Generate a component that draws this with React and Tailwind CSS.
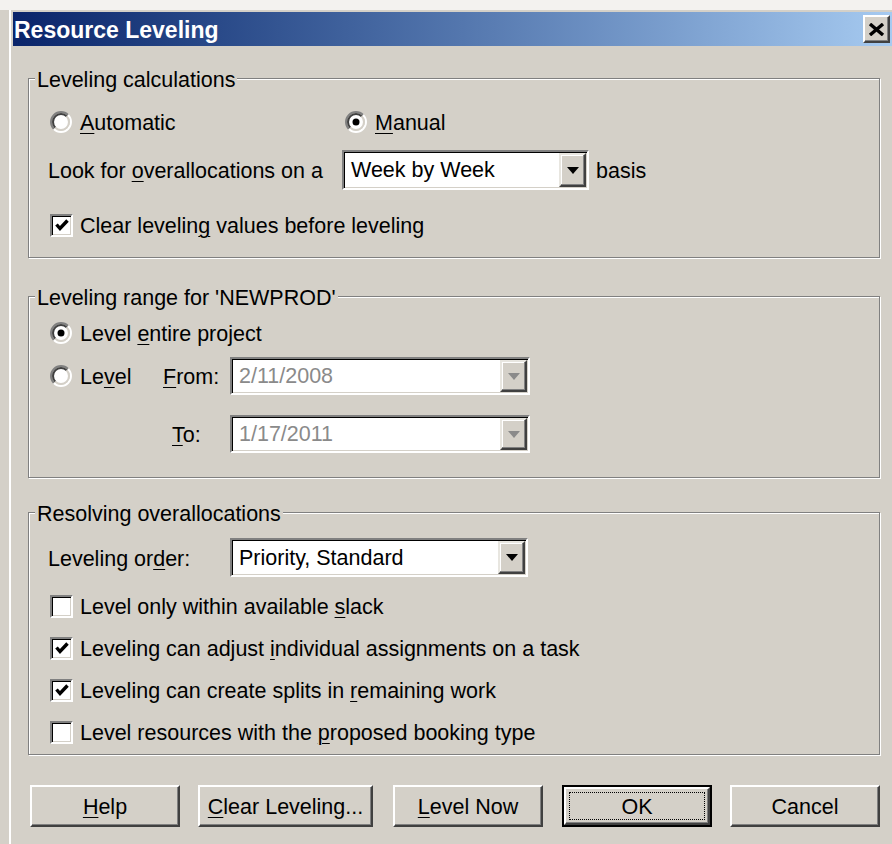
import React from "react";

// Mnemonic letter (underlined access key)
const Mn = ({ children }) => (
  <span className="underline decoration-1 underline-offset-[3px]">{children}</span>
);

// Label text, nudged to sit on the same optical line as the controls
const T = ({ className = "", children }) => (
  <span className={`relative top-[2px] ${className}`}>{children}</span>
);

function Radio({ checked }) {
  const c = 11;
  const arc = (r, a, color) => {
    const k = 0.7071;
    const bl = [c - r * k, c + r * k];
    const tr = [c + r * k, c - r * k];
    const [s, e] = a === "tl" ? [bl, tr] : [tr, bl];
    return (
      <path
        d={`M${s[0]} ${s[1]} A${r} ${r} 0 0 1 ${e[0]} ${e[1]}`}
        fill="none"
        stroke={color}
        strokeWidth="2"
      />
    );
  };
  return (
    <svg width="22" height="22" viewBox="0 0 22 22" className="shrink-0">
      <circle cx="11" cy="11" r="8" fill="#fff" />
      {arc(10, "tl", "#808080")}
      {arc(10, "br", "#ffffff")}
      {arc(8, "tl", "#404040")}
      {arc(8, "br", "#d4d0c8")}
      {checked && <circle cx="11" cy="11" r="3.5" fill="#000" />}
    </svg>
  );
}

function Check({ checked }) {
  return (
    <div className="w-[23px] h-[23px] shrink-0 bg-white border-t-2 border-l-2 border-t-[#808080] border-l-[#808080] border-b-2 border-r-2 border-b-white border-r-white shadow-[inset_1px_1px_0_#000,inset_-1px_-1px_0_#d4d0c8] flex items-center justify-center">
      {checked && (
        <svg width="16" height="16" viewBox="0 0 16 16">
          <polyline points="2.5,7.5 6,11.5 13.5,3.5" fill="none" stroke="#000" strokeWidth="3.4" />
        </svg>
      )}
    </div>
  );
}

function DropButton({ disabled }) {
  return (
    <div className="w-[27px] h-full shrink-0 bg-[#d4d0c8] border-t-2 border-l-2 border-t-[#e8e6e0] border-l-[#e8e6e0] border-b-2 border-r-2 border-b-[#404040] border-r-[#404040] shadow-[inset_-1px_-1px_0_#808080,inset_1px_1px_0_#fff] flex items-center justify-center">
      <svg width="12" height="7" viewBox="0 0 12 7">
        <polygon points="0,0 12,0 6,7" fill={disabled ? "#8a8a8a" : "#000"} />
      </svg>
    </div>
  );
}

function Combo({ value, width, height, disabled }) {
  return (
    <div
      className={`${width} ${height} shrink-0 flex bg-white border-t-2 border-l-2 border-t-[#808080] border-l-[#808080] border-b-2 border-r-2 border-b-white border-r-white shadow-[inset_1px_1px_0_#000,inset_-1px_-1px_0_#d4d0c8] p-[1px]`}
    >
      <div className={`flex-1 flex items-center pl-[6px] ${disabled ? "text-[#8a8a8a]" : "text-black"}`}>
        <span className="relative top-[1px]">{value}</span>
      </div>
      <DropButton disabled={disabled} />
    </div>
  );
}

function Group({ label, className, children }) {
  return (
    <div
      className={`relative ml-[15px] w-[852px] border border-[#808080] shadow-[inset_1px_1px_0_#fff,1px_1px_0_#fff] ${className}`}
    >
      <div className="absolute left-[6px] top-[-11px] px-[2px] bg-[#d4d0c8] leading-[24px]">
        {label}
      </div>
      {children}
    </div>
  );
}

function Button({ children, width, isDefault }) {
  const inner = (
    <div className="relative w-full h-full bg-[#d4d0c8] border-t-2 border-l-2 border-t-white border-l-white border-b-2 border-r-2 border-b-[#404040] border-r-[#404040] shadow-[inset_-1px_-1px_0_#808080] flex items-center justify-center">
      {isDefault && (
        <div className="absolute inset-[3px] border border-dotted border-black" />
      )}
      <span className="relative top-[2px]">{children}</span>
    </div>
  );
  return (
    <div className={`${width} h-[42px] shrink-0 ${isDefault ? "border-2 border-black" : ""}`}>
      {inner}
    </div>
  );
}

export default function App() {
  return (
    <div className="w-[892px] h-[844px] overflow-hidden bg-[#d4d0c8] font-['Liberation_Sans',Arial,sans-serif] text-[21.5px] leading-none text-black">
      <div className="h-[10px] bg-[#f3f2ef]" />
      <div className="flex h-[834px]">
        <div className="w-[9px] shrink-0" />
        <div className="flex-1 border-l-2 border-l-white pl-[2px] pt-[2px]">
          {/* Title bar */}
          <div className="h-[34px] flex items-center justify-between bg-linear-to-r from-[#0a246a] to-[#a6caf0] pl-[1px] pr-[2px]">
            <span className="relative top-[1px] font-bold text-white text-[23px]">Resource Leveling</span>
            <div className="w-[27px] h-[28px] bg-[#d4d0c8] border-t-2 border-l-2 border-t-white border-l-white border-b-2 border-r-2 border-b-[#404040] border-r-[#404040] shadow-[inset_-1px_-1px_0_#808080] flex items-center justify-center">
              <svg width="17" height="13" viewBox="0 0 17 13">
                <path d="M2 1 L15 12 M15 1 L2 12" stroke="#000" strokeWidth="3.4" />
              </svg>
            </div>
          </div>

          {/* Leveling calculations */}
          <Group label="Leveling calculations" className="mt-[32px] h-[180px] pt-[31px] pl-[19px]">
            <div className="h-[24px] flex items-center">
              <div className="w-[295px] flex items-center gap-[8px] ml-[2px]">
                <Radio />
                <T>
                  <Mn>A</Mn>utomatic
                </T>
              </div>
              <div className="flex items-center gap-[8px]">
                <Radio checked />
                <T>
                  <Mn>M</Mn>anual
                </T>
              </div>
            </div>
            <div className="mt-[16px] h-[40px] flex items-center">
              <T className="w-[294px] shrink-0">
                Look for <Mn>o</Mn>verallocations on a
              </T>
              <Combo value="Week by Week" width="w-[247px]" height="h-[40px]" />
              <T className="ml-[7px]">basis</T>
            </div>
            <div className="mt-[23px] h-[24px] flex items-center gap-[7px] ml-[2px]">
              <Check checked />
              <T>
                Clear levelin<Mn>g</Mn> values before leveling
              </T>
            </div>
          </Group>

          {/* Leveling range */}
          <Group label="Leveling range for 'NEWPROD'" className="mt-[38px] h-[182px] pt-[24px] pl-[19px]">
            <div className="h-[24px] flex items-center gap-[8px] ml-[2px]">
              <Radio checked />
              <T>
                Level <Mn>e</Mn>ntire project
              </T>
            </div>
            <div className="mt-[12px] h-[38px] flex items-center">
              <div className="w-[113px] shrink-0 flex items-center gap-[8px] ml-[2px]">
                <Radio />
                <T>
                  Le<Mn>v</Mn>el
                </T>
              </div>
              <T className="w-[67px] shrink-0">
                <Mn>F</Mn>rom:
              </T>
              <Combo value="2/11/2008" width="w-[300px]" height="h-[38px]" disabled />
            </div>
            <div className="mt-[20px] h-[38px] flex items-center">
              <T className="ml-[124px] w-[58px] shrink-0">
                <Mn>T</Mn>o:
              </T>
              <Combo value="1/17/2011" width="w-[300px]" height="h-[38px]" disabled />
            </div>
          </Group>

          {/* Resolving overallocations */}
          <Group label="Resolving overallocations" className="mt-[34px] h-[243px] pt-[25px] pl-[19px]">
            <div className="h-[39px] flex items-center">
              <T className="w-[182px] shrink-0">
                Leveling or<Mn>d</Mn>er:
              </T>
              <Combo value="Priority, Standard" width="w-[298px]" height="h-[39px]" />
            </div>
            <div className="mt-[17px] flex flex-col gap-[18px] ml-[2px]">
              <div className="h-[24px] flex items-center gap-[7px]">
                <Check />
                <T>
                  Level only within available <Mn>s</Mn>lack
                </T>
              </div>
              <div className="h-[24px] flex items-center gap-[7px]">
                <Check checked />
                <T>
                  Leveling can adjust <Mn>i</Mn>ndividual assignments on a task
                </T>
              </div>
              <div className="h-[24px] flex items-center gap-[7px]">
                <Check checked />
                <T>
                  Leveling can create splits in <Mn>r</Mn>emaining work
                </T>
              </div>
              <div className="h-[24px] flex items-center gap-[7px]">
                <Check />
                <T>
                  Level resources with the <Mn>p</Mn>roposed booking type
                </T>
              </div>
            </div>
          </Group>

          {/* Buttons */}
          <div className="mt-[30px] ml-[17px] flex items-center">
            <Button width="w-[150px]">
              <Mn>H</Mn>elp
            </Button>
            <div className="w-[18px] shrink-0" />
            <Button width="w-[175px]">
              <Mn>C</Mn>lear Leveling...
            </Button>
            <div className="w-[20px] shrink-0" />
            <Button width="w-[150px]">
              <Mn>L</Mn>evel Now
            </Button>
            <div className="w-[19px] shrink-0" />
            <Button width="w-[150px]" isDefault>
              OK
            </Button>
            <div className="w-[18px] shrink-0" />
            <Button width="w-[150px]">Cancel</Button>
          </div>
        </div>
      </div>
    </div>
  );
}
